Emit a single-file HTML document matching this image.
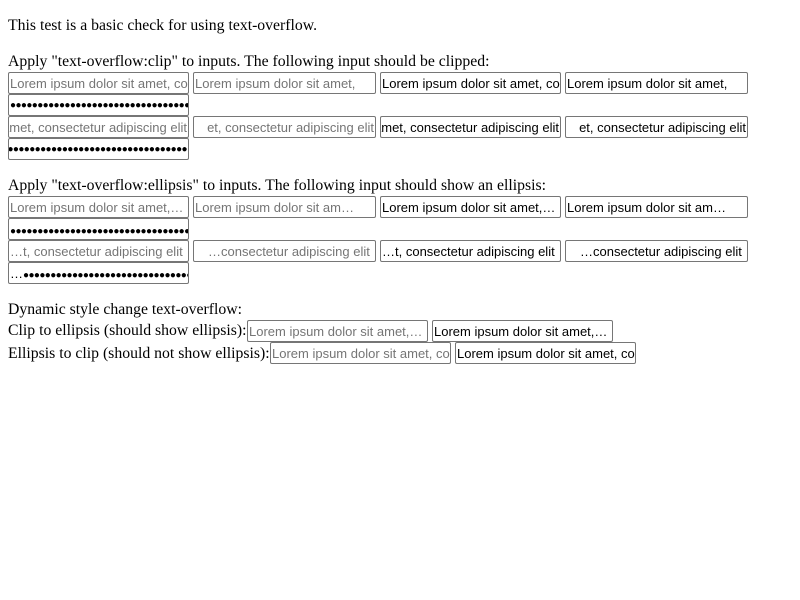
<!DOCTYPE html>
<html><head><style>
body{margin:0;width:800px;height:600px;background:#fff;position:relative;font-family:"Liberation Serif",serif;font-size:15.75px;color:#000}
.t{position:absolute;left:8px;white-space:nowrap;line-height:18px}
.b{position:absolute;box-sizing:border-box;height:22px;border:1px solid #767676;border-radius:2px;font-family:"Liberation Sans",sans-serif;font-size:13px;line-height:18px;padding:2px 1px 0;overflow:hidden;white-space:nowrap;background:#fff;color:#000}
.g{color:#757575}
.w{width:181px}
.s{width:183px}
.r{display:flex;justify-content:flex-end}
.d{font-size:10px;letter-spacing:-0.6px;line-height:18px}
</style></head><body>
<div class="t" style="top:17px">This test is a basic check for using text-overflow.</div>
<div class="t" style="top:53px">Apply "text-overflow:clip" to inputs. The following input should be clipped:</div>

<div class="b w g" style="left:8px;top:72px">Lorem ipsum dolor sit amet, consectetur</div>
<div class="b s g" style="left:193px;top:72px;padding-right:14px">Lorem ipsum dolor sit amet,</div>
<div class="b w" style="left:380px;top:72px">Lorem ipsum dolor sit amet, consectetur</div>
<div class="b s" style="left:565px;top:72px">Lorem ipsum dolor sit amet,</div>
<div class="b w d" style="left:8px;top:94px">●●●●●●●●●●●●●●●●●●●●●●●●●●●●●●●●●●●●●●●●●●</div>
<div class="b w g r" style="left:8px;top:116px"><span>dolor sit amet, consectetur adipiscing elit</span></div>
<div class="b s g r" style="left:193px;top:116px;padding-left:12px"><span>et, consectetur adipiscing elit</span></div>
<div class="b w r" style="left:380px;top:116px"><span>dolor sit amet, consectetur adipiscing elit</span></div>
<div class="b s r" style="left:565px;top:116px;padding-left:12px"><span>et, consectetur adipiscing elit</span></div>
<div class="b w d r" style="left:8px;top:138px"><span>●●●●●●●●●●●●●●●●●●●●●●●●●●●●●●●●●●●●●●●●●●●●</span></div>

<div class="t" style="top:177px">Apply "text-overflow:ellipsis" to inputs. The following input should show an ellipsis:</div>
<div class="b w g" style="left:8px;top:196px">Lorem ipsum dolor sit amet,…</div>
<div class="b s g" style="left:193px;top:196px">Lorem ipsum dolor sit am…</div>
<div class="b w" style="left:380px;top:196px">Lorem ipsum dolor sit amet,…</div>
<div class="b s" style="left:565px;top:196px">Lorem ipsum dolor sit am…</div>
<div class="b w d" style="left:8px;top:218px">●●●●●●●●●●●●●●●●●●●●●●●●●●●●●●●●●●<span style="font-size:13px;letter-spacing:0">…</span></div>
<div class="b w g" style="left:8px;top:240px">…t, consectetur adipiscing elit</div>
<div class="b s g" style="left:193px;top:240px;padding-left:14px">…consectetur adipiscing elit</div>
<div class="b w" style="left:380px;top:240px">…t, consectetur adipiscing elit</div>
<div class="b s" style="left:565px;top:240px;padding-left:14px">…consectetur adipiscing elit</div>
<div class="b w d" style="left:8px;top:262px"><span style="font-size:13px;letter-spacing:0">…</span>●●●●●●●●●●●●●●●●●●●●●●●●●●●●●●●●●●●●●</div>

<div class="t" style="top:301px">Dynamic style change text-overflow:</div>
<div class="t" style="top:322px">Clip to ellipsis (should show ellipsis):</div>
<div class="b w g" style="left:247px;top:320px">Lorem ipsum dolor sit amet,…</div>
<div class="b w" style="left:432px;top:320px">Lorem ipsum dolor sit amet,…</div>
<div class="t" style="top:345px">Ellipsis to clip (should not show ellipsis):</div>
<div class="b w g" style="left:270px;top:342px">Lorem ipsum dolor sit amet, consectetur</div>
<div class="b w" style="left:455px;top:342px">Lorem ipsum dolor sit amet, consectetur</div>
</body></html>
